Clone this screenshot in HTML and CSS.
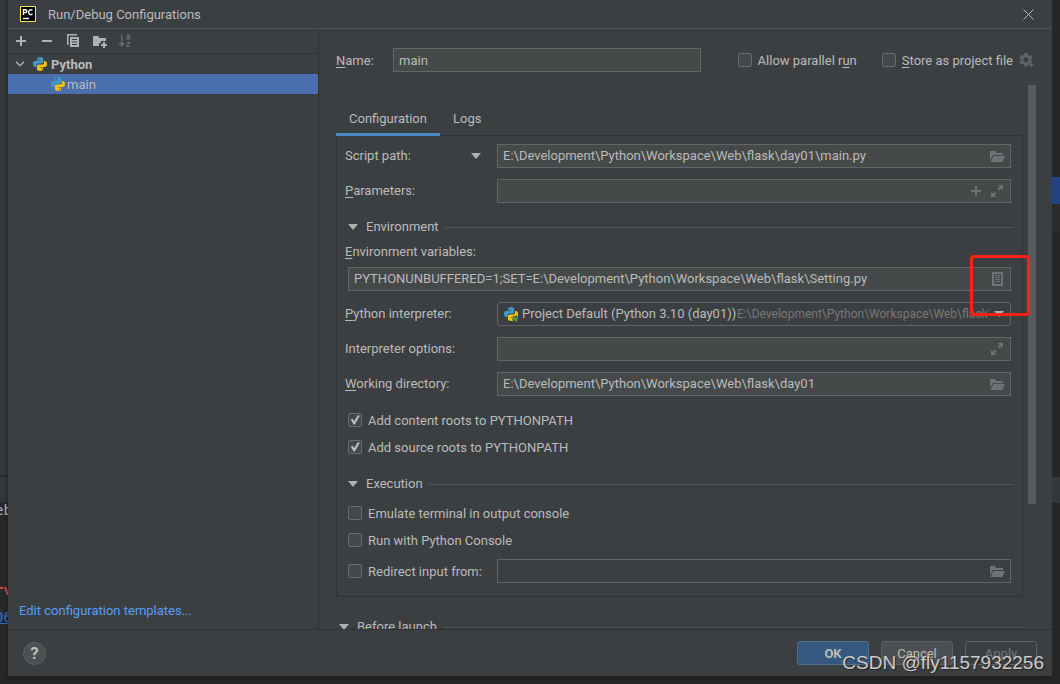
FILE: index.html
```html
<!DOCTYPE html>
<html lang="en">
<head>
<meta charset="utf-8">
<title>Run/Debug Configurations</title>
<link rel="stylesheet" href="styles.css">
</head>
<body>
<svg class="defs" aria-hidden="true">
  <symbol id="python" viewBox="0 0 16 16">
    <path fill="#3f9bce" d="M7.900 1C5.600 1 5 1.900 5 3v1.500h3.300V5H3.200C1.800 5 1 6.200 1 8s.8 3 2.200 3H4.500V9.400C4.500 8 5.500 7.500 6.500 7.500h3c1 0 1.700-.8 1.700-1.800V3c0-1.300-1.200-2-3.300-2z"/>
    <path fill="#f2c410" d="M8.200 15c2.300 0 2.900-.9 2.900-2v-1.500H7.800V11h5c1.400 0 2.200-1.200 2.200-3s-.8-3-2.200-3h-.8v1.700c0 1.200-1 1.900-2 1.900H6.600c-1 0-1.700.8-1.700 1.800V13c0 1.300 1.200 2 3.300 2z"/>
    <circle cx="6.500" cy="2.700" r=".6" fill="#3c3f41"/>
    <circle cx="9.600" cy="13.300" r=".6" fill="#3c3f41"/>
  </symbol>
  <symbol id="folder" viewBox="0 0 16 16">
    <path d="M1 3h5l1 2h7v2H4L1 12z"/><path d="M4.500 8H16l-2.600 6H1.500z"/>
  </symbol>
  <symbol id="expand" viewBox="0 0 16 16">
    <path d="M9 2h5v5l-1.700-1.700-2.100 2.100-1.600-1.600 2.100-2.100zM7 14H2V9l1.700 1.700 2.100-2.100 1.600 1.600-2.100 2.100z"/>
  </symbol>
  <symbol id="down" viewBox="0 0 10 6"><path fill="#afb1b3" d="M0 0h10L5 6z"/></symbol>
</svg>
<div class="desktop">
  <div class="editor-left" aria-hidden="true">
    <div class="pane-top"></div>
    <div class="pane-tab"></div>
    <div class="code"><span class="code-plain">eb</span><span class="code-red">rv</span><span class="code-link">06</span></div>
  </div>
  <section class="dialog" aria-label="Run/Debug Configurations">
    <header class="titlebar">
      <svg class="app-icon" viewBox="0 0 16 16"><path fill="#000" stroke="#f5e94b" d="M.5.5h15v15H.5z"/><path fill="none" stroke="#fff" stroke-width="1.400" d="M3.500 9V3.700h1.800c2 0 2 2.900 0 2.900H3.500M12.500 4.300C10.800 3 8.600 4 8.600 6.200s2.200 3.200 3.900 1.900M3 12.500h6"/></svg>
      <h1>Run/Debug Configurations</h1>
      <button class="plain" aria-label="Close"><svg width="11" height="11" viewBox="0 0 11 11"><path stroke="#bbb" d="M.5.5l10 10M10.500.5l-10 10"/></svg></button>
    </header>
    <div class="body">
      <aside class="sidebar">
        <div class="toolbar">
          <button class="plain" aria-label="Add"><svg viewBox="0 0 16 16"><path d="M7 3h2v4h4v2H9v4H7V9H3V7h4z"/></svg></button>
          <button class="plain" aria-label="Remove"><svg viewBox="0 0 16 16"><path d="M3 7h10v2H3z"/></svg></button>
          <button class="plain" aria-label="Copy"><svg viewBox="0 0 16 16"><path d="M2 1h10v1.500H3.500V12H2z"/><path fill-rule="evenodd" d="M5 4h9v10H5zM7 6v1h5V6zM7 8.500v1h5v-1zM7 11v1h5v-1z"/></svg></button>
          <button class="plain" aria-label="Move to folder"><svg viewBox="0 0 16 16"><path d="M2 3h5l1.500 2H15v3h-5v2H8v3H2z"/><path d="M12 9h2v2h2v2h-2v2h-2v-2h-2v-2h2z"/></svg></button>
          <button class="plain" aria-label="Sort" disabled><svg viewBox="0 0 16 16"><path d="M4 2h1.500v8H8l-3.200 4L1.500 10H4z"/><path fill="none" stroke="#66696b" stroke-width="1.300" d="M9.500 2.500h3v4M12.500 4.500h-2.300v1.700h2.300M9.500 9.700h3.300l-3.200 3.700h3.700"/></svg></button>
        </div>
        <ul class="tree">
          <li class="row group"><svg class="chevron" viewBox="0 0 10 6"><path fill="none" stroke="#afb1b3" stroke-width="1.400" d="M1 .7l4 4 4-4"/></svg><svg class="icon"><use href="#python"/></svg><span>Python</span></li>
          <li class="row leaf"><svg class="icon"><use href="#python"/></svg><span>main</span></li>
        </ul>
        <a class="templates" href="#templates">Edit configuration templates...</a>
      </aside>
      <main class="content">
        <div class="name-row">
          <label for="name"><u>N</u>ame:</label>
          <input id="name" class="field" type="text" value="main">
          <label class="check parallel"><input type="checkbox"><span>Allow parallel r<u>u</u>n</span></label>
          <label class="check"><input type="checkbox"><span><u>S</u>tore as project file</span></label>
          <button class="plain gear" aria-label="Storage options"><svg viewBox="0 0 16 16"><path fill-rule="evenodd" d="M6.500 1h3l.4 2 1.300.7 1.900-.7 1.500 2.600L13.100 7v1.800l1.200 1L13 12.400l-2.300-.7-1 .6-.4 2.200H6.500l-.5-2.200-1.200-.6-2 .7-1.500-2.600 1.600-1.300V7L1.300 5.600 2.800 3l2 .7L6 3zM8 5.300a2.500 2.500 0 100 5 2.500 2.500 0 000-5z"/><path d="M10 12h6l-3 3.500z"/></svg></button>
        </div>
        <div class="scroller">
          <div class="page">
            <div class="tabs" role="tablist">
              <button class="tab active" role="tab" aria-selected="true">Configuration</button>
              <button class="tab" role="tab" aria-selected="false">Logs</button>
            </div>
            <div class="panel" role="tabpanel">
              <div class="form-row">
                <label class="with-arrow" for="script">Script path:<svg class="arrow"><use href="#down"/></svg></label>
                <div class="field"><input id="script" type="text" value="E:\Development\Python\Workspace\Web\flask\day01\main.py"><button class="plain" aria-label="Browse script"><svg><use href="#folder"/></svg></button></div>
              </div>
              <div class="form-row">
                <label for="params"><span><u>P</u>arameters:</span></label>
                <div class="field"><input id="params" type="text"><button class="plain" aria-label="Insert macro"><svg viewBox="0 0 16 16"><path d="M7 3h2v4h4v2H9v4H7V9H3V7h4z"/></svg></button><button class="plain" aria-label="Expand parameters"><svg><use href="#expand"/></svg></button></div>
              </div>
              <h2 class="section environment"><svg class="arrow"><use href="#down"/></svg>Environment</h2>
              <label class="env-label" for="env"><u>E</u>nvironment variables:</label>
              <div class="field env-field"><input id="env" type="text" value="PYTHONUNBUFFERED=1;SET=E:\Development\Python\Workspace\Web\flask\Setting.py"><span class="marked"><button class="plain" aria-label="Edit environment variables"><svg viewBox="0 0 16 16"><path fill-rule="evenodd" d="M3 1h11v14H3zM5 3v10h7V3z"/><path d="M6 4h5v1H6zM6 6h5v1H6zM6 8h5v1H6zM6 10h5v1H6z"/></svg></button><i class="highlight"></i></span></div>
              <div class="form-row">
                <label for="interp"><span><u>P</u>ython interpreter:</span></label>
                <div class="field combo"><svg class="icon" viewBox="0 0 16 16"><use href="#python"/><path fill="none" stroke="#3c3f41" stroke-width="3" d="M11 10l2 5 2-5"/><path fill="none" stroke="#62a644" stroke-width="1.400" d="M11 10l2 5 2-5"/></svg><select id="interp"><option>Project Default (Python 3.10 (day01))</option></select><span class="hint">E:\Development\Python\Workspace\Web\flask\</span><svg class="arrow"><use href="#down"/></svg></div>
              </div>
              <div class="form-row">
                <label for="options">Interpreter options:</label>
                <div class="field"><input id="options" type="text"><button class="plain" aria-label="Expand options"><svg><use href="#expand"/></svg></button></div>
              </div>
              <div class="form-row">
                <label for="workdir"><span><u>W</u>orking directory:</span></label>
                <div class="field"><input id="workdir" type="text" value="E:\Development\Python\Workspace\Web\flask\day01"><button class="plain" aria-label="Browse directory"><svg><use href="#folder"/></svg></button></div>
              </div>
              <div class="checks roots">
                <label class="check"><input type="checkbox" checked><span>Add content roots to PYTHONPATH</span></label>
                <label class="check"><input type="checkbox" checked><span>Add source roots to PYTHONPATH</span></label>
              </div>
              <h2 class="section execution"><svg class="arrow"><use href="#down"/></svg>Execution</h2>
              <div class="checks">
                <label class="check"><input type="checkbox"><span>Emulate terminal in output console</span></label>
                <label class="check"><input type="checkbox"><span>Run with Python Console</span></label>
              </div>
              <div class="form-row redirect">
                <label class="check"><input type="checkbox"><span>Redirect input from:</span></label>
                <div class="field off"><input type="text" aria-label="Redirect input from" disabled><button class="plain" aria-label="Browse input" disabled><svg><use href="#folder"/></svg></button></div>
              </div>
            </div>
            <h2 class="section before"><svg class="arrow"><use href="#down"/></svg>Before launch</h2>
          </div>
          <div class="scrollbar"><div class="thumb"></div></div>
        </div>
      </main>
    </div>
    <footer class="footer">
      <button class="help" aria-label="Help">?</button>
      <button class="btn primary">OK</button>
      <button class="btn">Cancel</button>
      <button class="btn apply" disabled>Apply</button>
    </footer>
  </section>
  <div class="editor-right" aria-hidden="true"><div class="r-selected"></div><div class="r-gutter"></div><div class="r-tab"></div></div>
  <div class="watermark">CSDN @fly1157932256</div>
</div>
</body>
</html>
```
FILE: styles.css
```css
* { box-sizing: border-box; }
body {
  margin: 0;
  background: #2b2b2b;
  color: #bbbbbb;
  font: 13px/20px Roboto, "Noto Sans", sans-serif;
}
.defs { position: absolute; width: 0; height: 0; }
svg { display: block; flex: none; }
button, input, select { font: inherit; color: inherit; }
h1, h2 { margin: 0; font-size: 13px; font-weight: 400; }
u { text-underline-offset: 2px; }
.plain { display: flex; padding: 0; border: 0; background: none; }
.plain svg { fill: #afb1b3; }

.desktop {
  position: relative;
  display: grid;
  grid-template-columns: 8px minmax(0, 1fr) 8px;
  height: 100vh;
  padding-bottom: 8px;
  background: #272727;
  overflow: hidden;
}
.editor-left { display: flex; flex-direction: column; overflow: hidden; background: #292929; }
.pane-top { flex: none; height: 476px; background: #38393b; border-bottom: 1px solid #2c2c2c; }
.pane-tab { flex: none; height: 26px; background: #37393b; border-top: 1px solid #2c2c2c; }
.code { display: flex; flex-direction: column; width: 20px; font: 14px/20px "DejaVu Sans Mono", monospace; margin: -2px 0 0 -5px; }
.code-red { color: #e05050; font-weight: 700; margin-top: 60px; }
.code-link { color: #287bde; line-height: 18px; margin-top: 8px; text-decoration: underline; }
.editor-right { background: #272727; padding-top: 177px; }
.r-selected { height: 27px; background: #214283; }
.r-gutter { height: 273px; border-top: 27px solid #2b2b2b; }
.r-tab { height: 26px; background: #35383a; }

.dialog {
  display: flex;
  flex-direction: column;
  min-width: 0;
  min-height: 0;
  background: #3c3f41;
  box-shadow: 0 0 6px rgba(0, 0, 0, .5);
}
.titlebar {
  display: flex;
  align-items: center;
  height: 29px;
  padding: 0 18px 0 12px;
  border-bottom: 1px solid #515151;
}
.titlebar h1 { flex: 1; margin-left: 12px; padding-top: 2px; }
.app-icon { width: 16px; height: 16px; }
.body { flex: 1; display: flex; min-height: 0; border-bottom: 1px solid #2f3132; }

.sidebar { display: flex; flex-direction: column; width: 311px; flex: none; border-right: 1px solid #323232; }
.toolbar { display: flex; align-items: center; gap: 10px; height: 25px; padding-left: 5px; border-bottom: 1px solid #323232; }
.toolbar svg { width: 16px; height: 16px; }
.toolbar button:disabled svg { fill: #66696b; }
.tree { flex: 1; margin: 0; padding: 0; list-style: none; }
.row { display: flex; align-items: center; height: 20px; }
.row span { padding-top: 2px; }
.icon { width: 16px; height: 16px; }
.group { padding-left: 7px; font-weight: 700; }
.group .icon { margin: 0 3px 0 7px; }
.leaf { padding-left: 42px; gap: 1px; background: #4b6eaf; }
.chevron { width: 10px; height: 6px; }
.templates { margin: 0 11px 8px; color: #589df6; text-decoration: none; }

.content { flex: 1; display: flex; flex-direction: column; min-width: 0; }
.name-row { display: flex; align-items: center; padding: 19px 18px 12px 17px; }
.name-row > label:first-child { width: 57px; padding-top: 2px; }
.name-row .field { width: 308px; padding: 0 5px; }
.field {
  display: flex;
  align-items: center;
  height: 24px;
  min-width: 0;
  border: 1px solid #646464;
  background: #45494a;
}
.field input { flex: 1; min-width: 0; height: 20px; padding: 0 5px; border: 0; outline: 0; background: none; }
.field .plain { width: 16px; margin-right: 5px; }
.field .plain svg { width: 16px; height: 16px; fill: #6e7376; }
.check { display: flex; align-items: center; gap: 6px; height: 20px; white-space: nowrap; }
.check span { padding-top: 2px; }
.check input {
  appearance: none;
  flex: none;
  width: 14px;
  height: 14px;
  margin: 0;
  border: 1px solid #6b6b6b;
  border-radius: 2px;
  background: #43494a;
}
.check input:checked { display: grid; place-items: center; }
.check input:checked::before {
  content: "";
  width: 10px;
  height: 10px;
  background: #bbbbbb;
  clip-path: polygon(8% 48%, 24% 36%, 42% 60%, 80% 0, 98% 10%, 48% 96%, 36% 96%);
}
.parallel { margin-left: auto; margin-right: 25px; }
.gear { margin-left: 5px; }
.gear svg { width: 16px; height: 16px; fill: #606365; }

.scroller { flex: 1; display: flex; min-height: 0; overflow: hidden; padding-right: 16px; }
.page { flex: 1; min-width: 0; padding: 19px 5px 0 17px; }
.scrollbar { width: 8px; padding-top: 1px; }
.thumb { height: 419px; background: #595b5d; }
.tabs { display: flex; margin-bottom: -1px; position: relative; }
.tab { height: 33px; padding: 2px 13px 0; border: 0; border-bottom: 3px solid transparent; background: none; }
.tab.active { border-bottom-color: #4a88c7; }
.panel { border: 1px solid #323232; padding: 8px 11px 13px 8px; }
.form-row { display: grid; grid-template-columns: 152px minmax(0, 1fr); align-items: center; margin-bottom: 11px; }
.with-arrow { display: flex; align-items: center; justify-content: space-between; padding-right: 16px; }
.arrow { width: 10px; height: 6px; }
.section { display: flex; align-items: center; height: 20px; }
.section .arrow { margin: 0 8px 0 3px; }
.section::after { content: ""; flex: 1; height: 1px; margin-left: 6px; background: #515151; }
.environment { margin: 14px -3px 5px 0; }
.execution { margin: 17px -3px 9px 0; }
.env-label { display: block; margin-bottom: 5px; }
.env-field { margin: 0 0 11px 3px; }
.marked { position: relative; display: flex; }
.highlight {
  position: absolute;
  inset: -16px -20px -29px -19px;
  border: 3px solid #fb2116;
  border-radius: 4px;
  pointer-events: none;
  z-index: 2;
}
.combo { padding: 0 6px 0 5px; border-radius: 3px; background: #3c3f41; }
.combo select { appearance: none; margin-left: 3px; padding: 0; border: 0; outline: 0; background: none; }
.hint { flex: 1; min-width: 0; margin-right: 5px; overflow: hidden; white-space: nowrap; color: #787878; font-size: 12px; }
.checks { display: grid; gap: 7px; padding-left: 3px; }
.roots { margin-top: 14px; }
.redirect { margin: 9px 0 0; }
.redirect .check { padding-left: 3px; }
.off { background: #3c3f41; }
.before { margin-top: 20px; }

.footer { display: flex; align-items: center; gap: 12px; height: 46px; padding: 0 15px; }
.help {
  width: 23px;
  height: 23px;
  margin-right: auto;
  padding: 0;
  border: 1px solid #5e6060;
  border-radius: 50%;
  background: #4c5052;
  font-size: 17px;
  font-weight: 700;
  line-height: 20px;
}
.btn { width: 72px; height: 24px; padding: 2px 0 0; border: 1px solid #5e6060; border-radius: 3px; background: #4c5052; }
.primary { border-color: #4c708c; background: #365880; font-weight: 700; }
.apply { background: #3c3f41; color: #777777; }
.watermark {
  position: absolute;
  right: 16px;
  bottom: 9px;
  color: #cccccc;
  font: 19px/24px "Liberation Sans", Arial, sans-serif;
  text-shadow: 1px 1px 1px #222222;
}
```
